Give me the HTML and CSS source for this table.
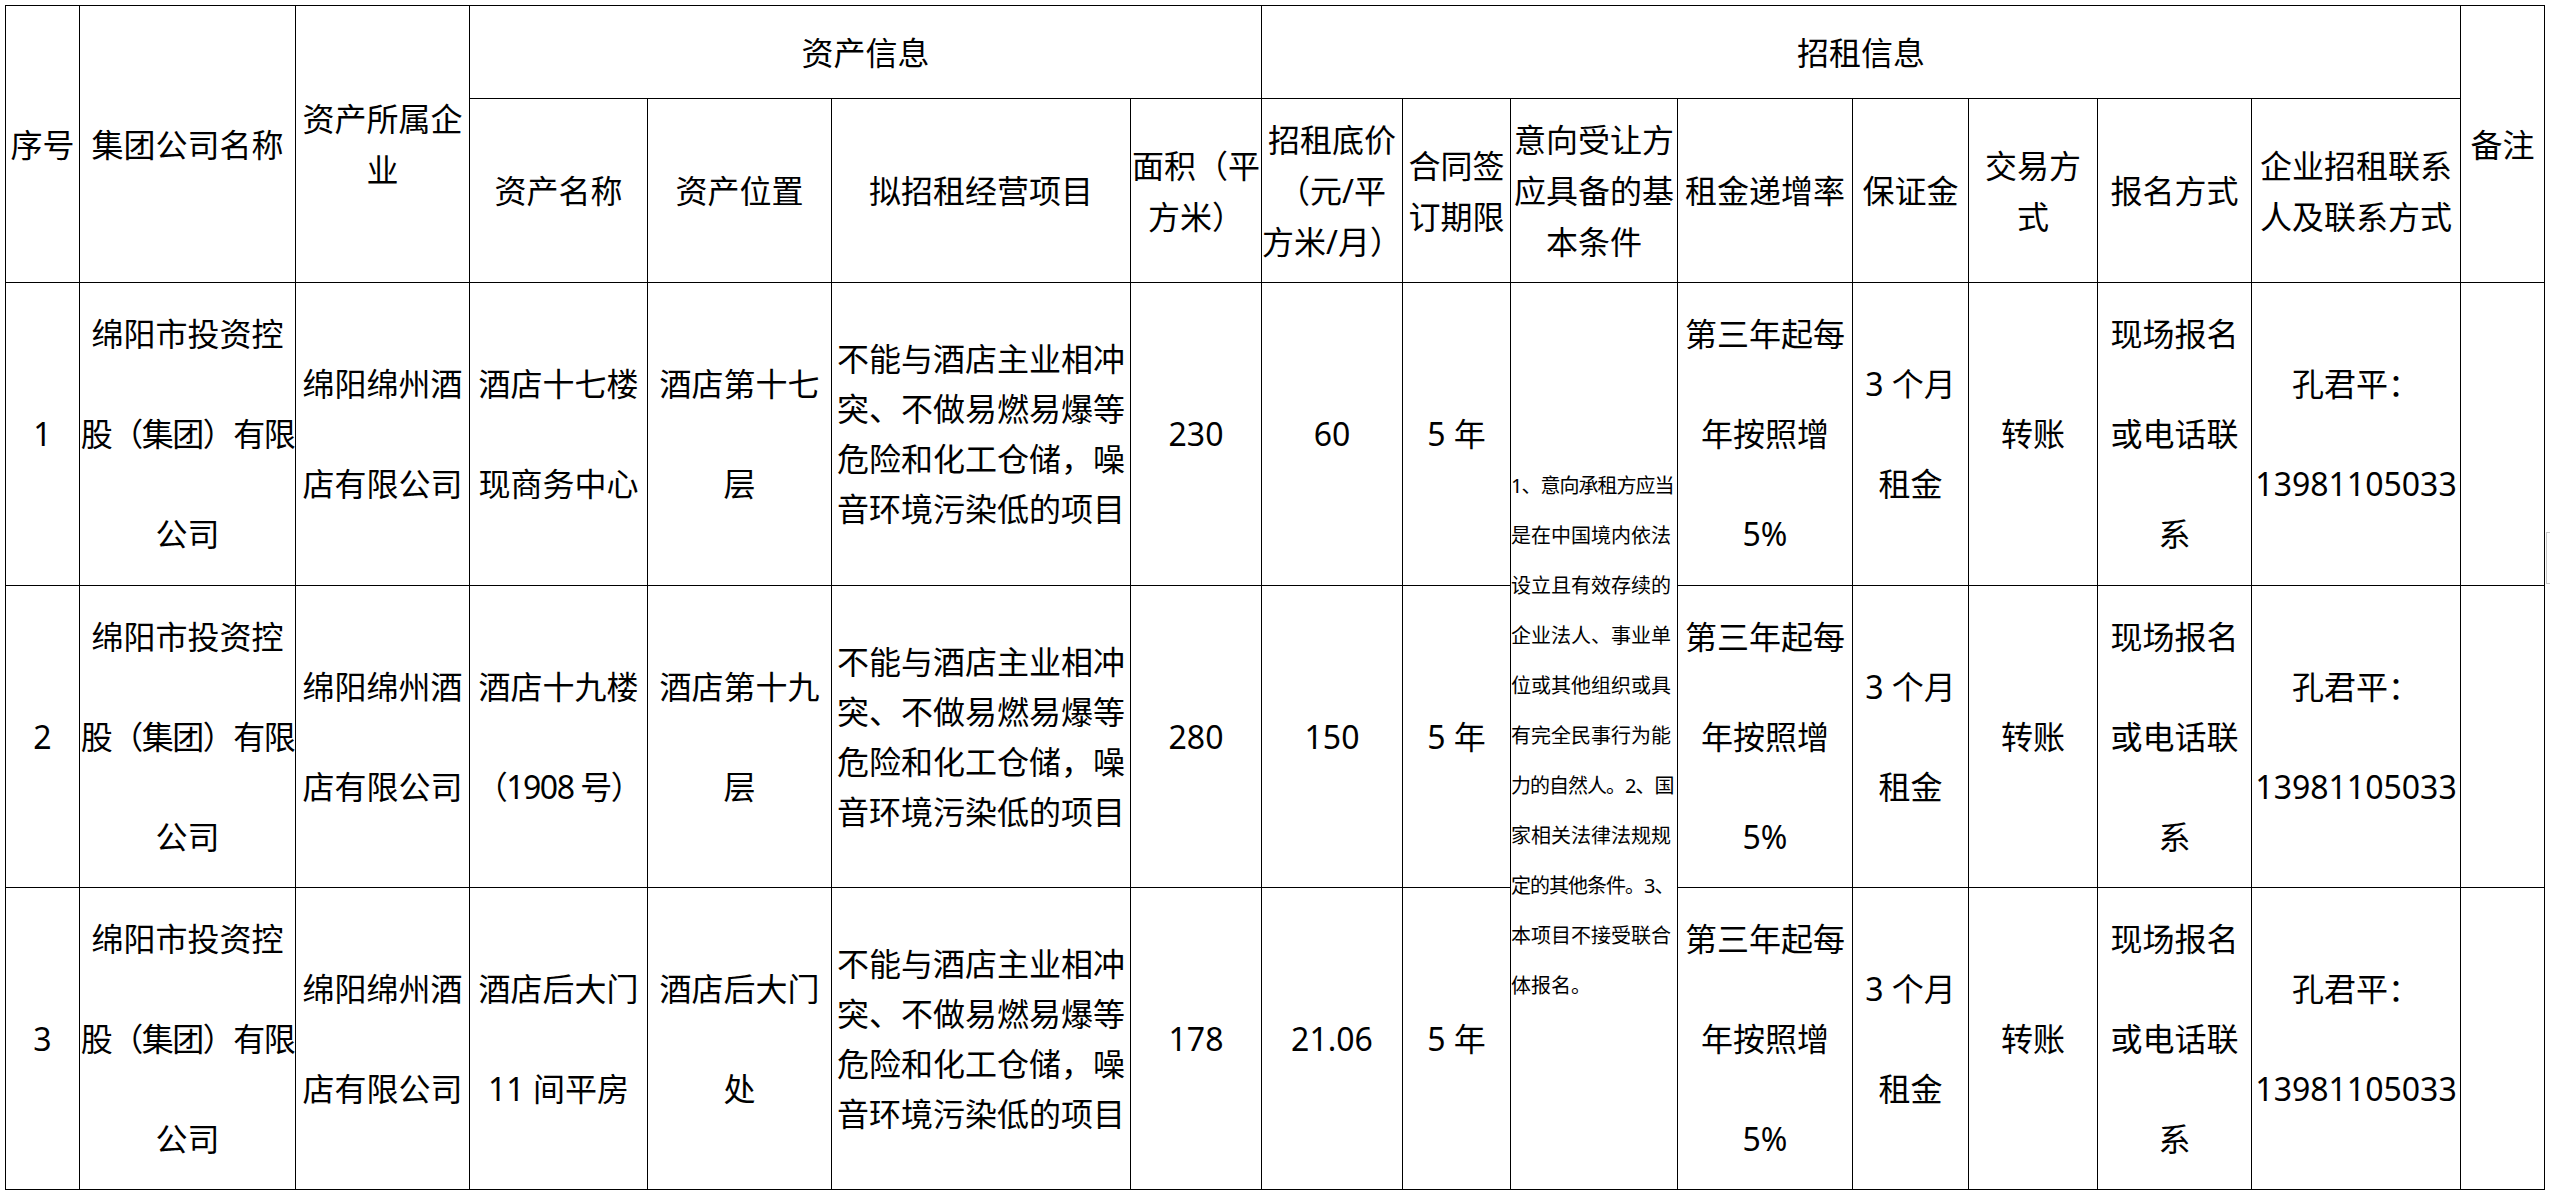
FILE: index.html
```html
<!DOCTYPE html>
<html lang="zh-CN">
<head>
<meta charset="utf-8">
<title>招租信息表</title>
<link rel="stylesheet" href="styles.css">
</head>
<body>
<table class="sheet">
  <colgroup>
    <col class="c-no"><col class="c-group"><col class="c-owner"><col class="c-name"><col class="c-loc"><col class="c-plan"><col class="c-area"><col class="c-price"><col class="c-term"><col class="c-cond"><col class="c-rate"><col class="c-dep"><col class="c-pay"><col class="c-reg"><col class="c-contact"><col class="c-note">
  </colgroup>
  <thead>
    <tr class="h1">
      <th rowspan="2">序号</th>
      <th rowspan="2">集团公司名称</th>
      <th rowspan="2">资产所属企<br>业</th>
      <th colspan="4">资产信息</th>
      <th colspan="8">招租信息</th>
      <th rowspan="2">备注</th>
    </tr>
    <tr class="h2">
      <th>资产名称</th>
      <th>资产位置</th>
      <th>拟招租经营项目</th>
      <th>面积（平<br>方米）</th>
      <th>招租底价<br>（元/平<br>方米/月）</th>
      <th>合同签<br>订期限</th>
      <th>意向受让方<br>应具备的基<br>本条件</th>
      <th>租金递增率</th>
      <th>保证金</th>
      <th>交易方<br>式</th>
      <th>报名方式</th>
      <th>企业招租联系<br>人及联系方式</th>
    </tr>
  </thead>
  <tbody>
    <tr class="r1">
      <td>1</td>
      <td>绵阳市投资控<br><span class="squeeze">股（集团）有限</span><br>公司</td>
      <td>绵阳绵州酒<br>店有限公司</td>
      <td>酒店十七楼<br>现商务中心</td>
      <td>酒店第十七<br>层</td>
      <td class="plan">不能与酒店主业相冲<br>突、不做易燃易爆等<br>危险和化工仓储，噪<br>音环境污染低的项目</td>
      <td>230</td>
      <td>60</td>
      <td>5 年</td>
      <td class="cond" rowspan="3">
        <span class="ln tight">1、意向承租方应当</span>
        <span class="ln">是在中国境内依法</span>
        <span class="ln">设立且有效存续的</span>
        <span class="ln">企业法人、事业单</span>
        <span class="ln">位或其他组织或具</span>
        <span class="ln">有完全民事行为能</span>
        <span class="ln tight">力的自然人。2、国</span>
        <span class="ln">家相关法律法规规</span>
        <span class="ln tight">定的其他条件。3、</span>
        <span class="ln">本项目不接受联合</span>
        <span class="ln">体报名。</span>
      </td>
      <td>第三年起每<br>年按照增<br>5%</td>
      <td>3 个月<br>租金</td>
      <td>转账</td>
      <td>现场报名<br>或电话联<br>系</td>
      <td>孔君平：<br>13981105033</td>
      <td></td>
    </tr>
    <tr class="r2">
      <td>2</td>
      <td>绵阳市投资控<br><span class="squeeze">股（集团）有限</span><br>公司</td>
      <td>绵阳绵州酒<br>店有限公司</td>
      <td>酒店十九楼<br><span class="squeeze">（1908 号）</span></td>
      <td>酒店第十九<br>层</td>
      <td class="plan">不能与酒店主业相冲<br>突、不做易燃易爆等<br>危险和化工仓储，噪<br>音环境污染低的项目</td>
      <td>280</td>
      <td>150</td>
      <td>5 年</td>
      <td>第三年起每<br>年按照增<br>5%</td>
      <td>3 个月<br>租金</td>
      <td>转账</td>
      <td>现场报名<br>或电话联<br>系</td>
      <td>孔君平：<br>13981105033</td>
      <td></td>
    </tr>
    <tr class="r3">
      <td>3</td>
      <td>绵阳市投资控<br><span class="squeeze">股（集团）有限</span><br>公司</td>
      <td>绵阳绵州酒<br>店有限公司</td>
      <td>酒店后大门<br>11 间平房</td>
      <td>酒店后大门<br>处</td>
      <td class="plan">不能与酒店主业相冲<br>突、不做易燃易爆等<br>危险和化工仓储，噪<br>音环境污染低的项目</td>
      <td>178</td>
      <td>21.06</td>
      <td>5 年</td>
      <td>第三年起每<br>年按照增<br>5%</td>
      <td>3 个月<br>租金</td>
      <td>转账</td>
      <td>现场报名<br>或电话联<br>系</td>
      <td>孔君平：<br>13981105033</td>
      <td></td>
    </tr>
  </tbody>
</table>
<div class="edge-mark"></div>
</body>
</html>
```

FILE: styles.css
```css
html, body {
  background: #ffffff;
}

body {
  margin: 5px;
  font-family: "Noto Sans", "Noto Sans CJK SC", sans-serif;
  color: #000000;
}

.sheet {
  border-collapse: collapse;
  table-layout: fixed;
  width: 2540px;
  font-size: 32px;
}

.c-no { width: 74px; }
.c-group { width: 216px; }
.c-owner { width: 174px; }
.c-name { width: 178px; }
.c-loc { width: 184px; }
.c-plan { width: 299px; }
.c-area { width: 131px; }
.c-price { width: 141px; }
.c-term { width: 108px; }
.c-cond { width: 167px; }
.c-rate { width: 175px; }
.c-dep { width: 116px; }
.c-pay { width: 129px; }
.c-reg { width: 154px; }
.c-contact { width: 209px; }
.c-note { width: 84px; }

.sheet th,
.sheet td {
  border: 1px solid #000000;
  padding: 0;
  text-align: center;
  vertical-align: middle;
  white-space: nowrap;
  font-weight: 400;
}

.sheet th {
  line-height: 51px;
}

.sheet td {
  line-height: 100px;
}

.h1 { height: 93px; }
.h2 { height: 184px; }
.r1 { height: 303px; }
.r2 { height: 302px; }
.r3 { height: 302px; }

.sheet td.plan {
  line-height: 50px;
}

.squeeze {
  letter-spacing: -1.5px;
}

.sheet td.cond {
  text-align: left;
  font-size: 20px;
  line-height: 50px;
}

.ln {
  display: block;
}

.tight {
  letter-spacing: -1px;
}

.edge-mark {
  position: absolute;
  left: 2546px;
  top: 532px;
  width: 8px;
  height: 50px;
  border: 1px solid #c8c8c8;
  border-right: none;
}
```
